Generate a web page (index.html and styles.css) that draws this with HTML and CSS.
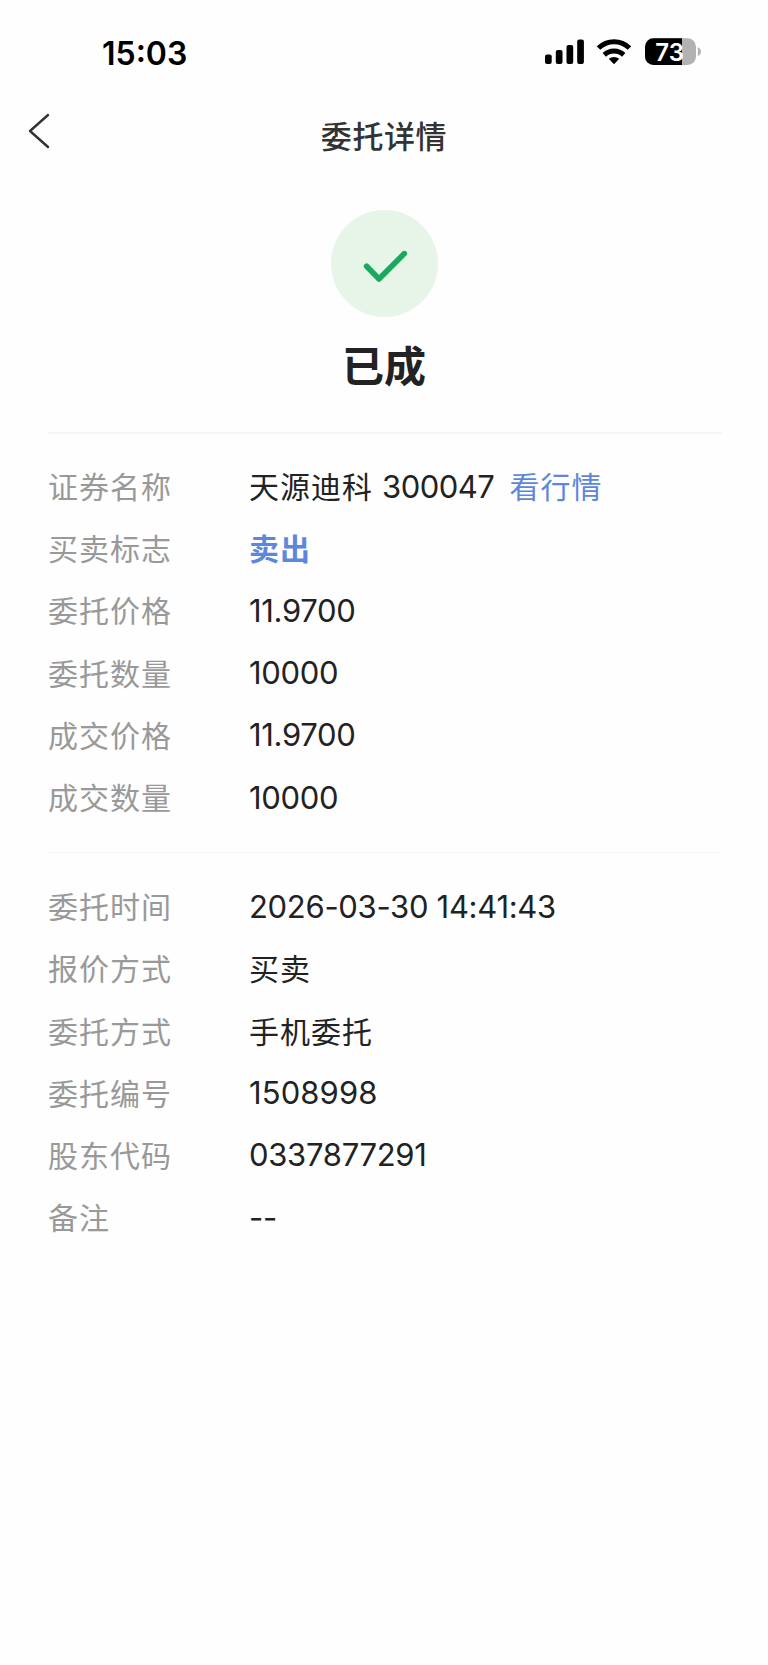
FILE: index.html
```html
<!DOCTYPE html>
<html lang="zh-CN">
<head>
<meta charset="utf-8">
<title>委托详情</title>
<link rel="stylesheet" href="styles.css">
</head>
<body>
<div class="status-bar">
  <span class="time">15:03</span>
  <div class="indicators">
    <svg class="signal" width="40" height="26" viewBox="0 0 40 26">
      <rect x="0" y="15.5" width="6.7" height="9.5" rx="2"/>
      <rect x="10.8" y="11" width="6.7" height="14" rx="2"/>
      <rect x="21.5" y="6" width="6.7" height="19" rx="2"/>
      <rect x="32.2" y="0.5" width="6.7" height="24.5" rx="2"/>
    </svg>
    <svg class="wifi" width="36" height="26" viewBox="0 0 36 26">
      <path class="wifi-arc" d="M2.5 9.1a22 22 0 0 1 31 0M8.3 15.8a14.2 14.2 0 0 1 19.4 0"/>
      <path d="M12.8 19.8a8 8 0 0 1 10.4 0l-4.4 4.8q-.8.8-1.6 0z"/>
    </svg>
    <svg class="battery" width="58" height="28" viewBox="0 0 58 28">
      <rect x="0" y="0.3" width="51" height="26.7" rx="8.5" fill="#b2b2b2"/>
      <path d="M37 .3H8.5A8.5 8.5 0 0 0 0 8.8v9.7A8.5 8.5 0 0 0 8.5 27H37z"/>
      <path d="M52.8 9.3c4.2 1.1 4.2 7.6 0 8.7z" fill="#b2b2b2"/>
      <text class="battery-level" x="24.6" y="22.6" text-anchor="middle">73</text>
    </svg>
  </div>
</div>

<header class="nav">
  <svg class="back" width="22" height="36" viewBox="0 0 22 36"><path d="M20 2 2 18l18 16"/></svg>
  <h1 class="title">委托详情</h1>
</header>

<section class="result">
  <svg class="check" width="107" height="107" viewBox="0 0 107 107">
    <circle cx="53.5" cy="53.5" r="53.5"/>
    <path d="M35.6 56.3 48 69 73.3 43.6"/>
  </svg>
  <h2 class="state">已成</h2>
</section>

<dl class="details">
  <dt>证券名称</dt><dd><span class="name">天源迪科</span><span class="num code">300047</span><a class="link">看行情</a></dd>
  <dt>买卖标志</dt><dd class="name sell">卖出</dd>
  <dt>委托价格</dt><dd class="num">11.9700</dd>
  <dt>委托数量</dt><dd class="num">10000</dd>
  <dt>成交价格</dt><dd class="num">11.9700</dd>
  <dt>成交数量</dt><dd class="num">10000</dd>
</dl>
<dl class="details details-thin">
  <dt>委托时间</dt><dd class="num">2026-03-30 14:41:43</dd>
  <dt>报价方式</dt><dd class="name">买卖</dd>
  <dt>委托方式</dt><dd class="name">手机委托</dd>
  <dt>委托编号</dt><dd class="num num-wide">1508998</dd>
  <dt>股东代码</dt><dd class="num">0337877291</dd>
  <dt>备注</dt><dd class="num">--</dd>
</dl>
</body>
</html>
```
FILE: styles.css
```css
* { box-sizing: border-box; }
body {
  margin: 0;
  min-height: 1665px;
  background: #fefefe;
  color: #222;
  font-family: "Noto Sans CJK SC", sans-serif;
}
.status-bar {
  height: 104px;
  padding: 0 65px 0 102px;
  display: flex;
  justify-content: space-between;
  align-items: center;
  color: #000;
}
.time {
  padding-top: 3px;
  font: 600 32px/40px Inter, sans-serif;
}
.indicators {
  display: flex;
  align-items: center;
}
.wifi { margin-left: 11px; }
.battery { margin-left: 13px; }
.wifi-arc { fill: none; stroke: #000; stroke-width: 5; }
.battery-level {
  font: 600 24px Inter, sans-serif;
  fill: #fff;
}
.nav {
  height: 64px;
  display: grid;
  grid-template-columns: 54px 1fr 54px;
  align-items: center;
}
.back {
  margin: 0 0 10px 28px;
  fill: none;
  stroke: #333;
  stroke-width: 2.4;
  stroke-linecap: round;
  stroke-linejoin: round;
}
.title {
  margin: 0;
  padding-bottom: 3px;
  text-align: center;
  font-size: 31px;
  line-height: 46px;
  font-weight: 500;
  letter-spacing: .6px;
  color: #333;
}
.result {
  height: 264px;
  padding-top: 42px;
  display: flex;
  flex-direction: column;
  align-items: center;
}
.check circle { fill: #e7f5e9; }
.check path {
  fill: none;
  stroke: #1aaa5d;
  stroke-width: 5.6;
  stroke-linecap: round;
  stroke-linejoin: round;
}
.state {
  margin: 17px 0 0;
  font-size: 42px;
  line-height: 60px;
  font-weight: 700;
}
.details {
  margin: 0 46px 0 48px;
  padding: 21px 0 24px;
  border-top: 2px solid #f7f7f7;
  display: grid;
  grid-template-columns: 201px 1fr;
  grid-auto-rows: 62.2px;
  align-items: center;
  font-size: 30px;
  letter-spacing: 1px;
}
.details-thin { border-top-width: 1px; padding-top: 22px; }
.details dt { color: #999; }
.details dd { margin: 0; display: flex; align-items: center; }
.details dt, .details .name, .details .link { padding-bottom: 2px; }
.details .num {
  font-family: Inter, sans-serif;
  font-size: 31px;
  letter-spacing: -.3px;
}
.details .num-wide { letter-spacing: .1px; }
.details .code { margin-left: 9px; letter-spacing: -.5px; }
.link { margin-left: 15px; color: #5d87dc; }
.details .sell { color: #5d87dc; font-weight: 700; }
```
